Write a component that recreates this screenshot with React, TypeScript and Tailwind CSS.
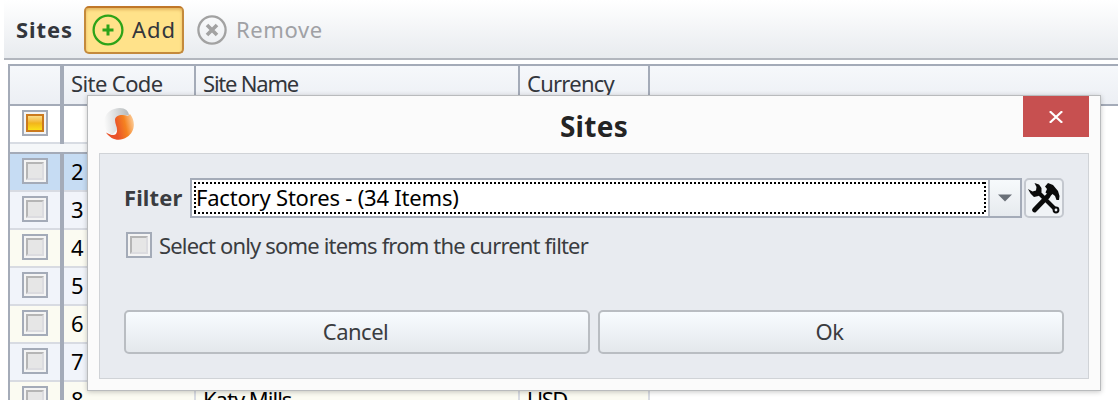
import React, { useId } from "react";

const FONT = "font-['Noto_Sans','Open_Sans',sans-serif]";

function CheckBox({ partial = false }: { partial?: boolean }) {
  return (
    <span className="flex h-[26px] w-[26px] shrink-0 items-center justify-center border-2 border-[#a4abb8] bg-[#f4f4f4]">
      {partial ? (
        <span className="h-[18px] w-[18px] border-2 border-[#cb7a1e] bg-linear-to-b from-[#fbdc86] via-[#f2b41c] to-[#fbe019]" />
      ) : (
        <span className="h-[18px] w-[18px] border-2 border-t-[#b5b5b5] border-r-[#dcdce0] border-b-[#dcdce0] border-l-[#b5b5b5] bg-[#e6e6e6]" />
      )}
    </span>
  );
}

function Tools() {
  return (
    <svg width="32" height="32" viewBox="0 0 32 32" className="shrink-0" fill="none" stroke="#0a0a0a">
      <path d="M6.5 28 L20 14" strokeWidth="4.8" strokeLinecap="round" />
      <path d="M17 4.5 L20 1 L25 3 L30 9 L31.5 14 L31 18 L28.5 18 L27 14 L24.5 12 L22 14.5 L17.5 10.5 L19 7 Z" fill="#0a0a0a" stroke="none" />
      <path d="M11 11 L27 27" strokeWidth="4" />
      <path d="M0 7 L4.5 9.5 L8 8.5 L8.5 5 L6.5 1 L11 2.5 L13.5 6 L13.5 10 L10.5 14 L6 15 L2.5 11.5 Z" fill="#0a0a0a" stroke="none" />
      <circle cx="28" cy="28" r="2.4" strokeWidth="2" fill="#eef1f5" />
    </svg>
  );
}

function Logo() {
  const id = useId();
  return (
    <svg width="32" height="34" viewBox="0 0 32 34">
      <defs>
        <linearGradient id={id + "g"} x1="0" y1="0.3" x2="1" y2="0.2">
          <stop offset="0" stopColor="#fafafa" />
          <stop offset="0.45" stopColor="#dcdedf" />
          <stop offset="1" stopColor="#b4b9bb" />
        </linearGradient>
        <linearGradient id={id + "o"} x1="0.3" y1="0.3" x2="1" y2="0.15">
          <stop offset="0" stopColor="#e9522a" />
          <stop offset="0.5" stopColor="#f58220" />
          <stop offset="1" stopColor="#fcd3a4" />
        </linearGradient>
      </defs>
      <path d="M1 16 C1 6 9 1 17 1 C22 1 26 4 26 8.5 C21 8 15 9 14 13 L15 22 L9 28 C4 25 1 21 1 16Z" fill={`url(#${id}g)`} />
      <path d="M12 13 C12 8 19 7 25 9 L27 7 C33 14 32 25 24 30 C17 35 8 33 3 25.5 C7 28 11 29 13 27 C16 22 12 18 12 13Z" fill={`url(#${id}o)`} />
    </svg>
  );
}

const rows = [
  { code: "2", tone: "bg-[#c6dcf3]" },
  { code: "3", tone: "bg-[#f1f4fa]" },
  { code: "4", tone: "bg-[#fbfbf2]" },
  { code: "5", tone: "bg-[#f1f4fa]" },
  { code: "6", tone: "bg-[#fbfbf2]" },
  { code: "7", tone: "bg-[#f1f4fa]" },
  { code: "8", tone: "bg-[#fbfbf2]", name: "Katy Mills", currency: "USD" },
];

function Toolbar() {
  return (
    <div className="ml-1 flex h-[60px] items-start border-b-2 border-[#b2b6be] bg-linear-to-b from-white to-[#e8ebef] text-[22px] leading-[46px] text-[#33363c]">
      <span className="mt-1.5 ml-3 w-[68px] font-bold tracking-[0.9px]">Sites</span>
      <button className="mt-1.5 flex h-12 w-[100px] items-center rounded-[5px] border-2 border-[#c48a3c] border-t-[#c07728] bg-[#ffe28a] pl-1.5 shadow-[inset_0_2px_3px_#e5b761]">
        <svg width="32" height="32" viewBox="0 0 32 32" fill="none" stroke="#2da318">
          <circle cx="16" cy="16" r="14.4" strokeWidth="2.3" />
          <path d="M16 10.5v11M10.5 16h11" strokeWidth="3" />
        </svg>
        <span className="mb-0.5 ml-2 leading-[42px] tracking-[0.9px]">Add</span>
      </button>
      <button className="mt-1.5 flex h-12 items-center pl-[13px] text-[#a0a1a5]">
        <svg width="30" height="30" viewBox="0 0 30 30" fill="none" stroke="#a2a2a2">
          <circle cx="15" cy="15" r="13.6" strokeWidth="2.3" />
          <path d="M10 10l10 10M20 10l-10 10" strokeWidth="3.6" />
        </svg>
        <span className="mb-0.5 ml-[9px] tracking-[0.6px]">Remove</span>
      </button>
    </div>
  );
}

function Grid() {
  return (
    <div className="mt-1 ml-2 h-[340px] border-t-2 border-l-2 border-[#a4abb8] text-[22px] text-black">
      <div className="flex h-10 border-b-2 border-[#a4abb8] bg-linear-to-b from-[#f6f8fb] to-[#eceff4] leading-[34px] text-[#33363c]">
        <div className="w-[54px] border-r-4 border-[#a4abb8]" />
        <div className="w-[132px] border-r-2 border-[#a4abb8] pl-[7px] tracking-[-0.6px]">Site Code</div>
        <div className="w-[324px] border-r-2 border-[#a4abb8] pl-[7px] tracking-[-1.2px]">Site Name</div>
        <div className="w-[130px] border-r-2 border-[#a4abb8] pl-[7px] tracking-[-0.75px]">Currency</div>
      </div>
      <div className="flex h-[38px] w-[640px] border-b-2 border-[#d8dce3] bg-white">
        <div className="h-[38px] w-[54px] border-r-4 border-[#a4abb8] pt-1 pl-3"><CheckBox partial /></div>
      </div>
      <div className="h-2.5 w-[640px] border-b-2 border-[#a4abb8] bg-[#f5f7f9]" />
      {rows.map((r) => (
        <div key={r.code} className={`flex h-[38px] w-[640px] leading-[34px] ${r.tone}`}>
          <div className="flex w-[54px] border-r-4 border-[#a4abb8]">
            <div className="w-full border-b-2 border-[#d8dbe2] pt-1 pl-3"><CheckBox /></div>
          </div>
          <div className="w-[132px] border-r-2 border-b-2 border-[#d8dbe2] pl-[7px]">{r.code}</div>
          <div className="w-[324px] border-r-2 border-b-2 border-[#d8dbe2] pl-[7px] tracking-[-1px]">{r.name}</div>
          <div className="w-[130px] border-r-2 border-b-2 border-[#d8dbe2] pl-[7px] tracking-[-1.4px]">{r.currency}</div>
        </div>
      ))}
    </div>
  );
}

function Dialog() {
  const action =
    "h-11 flex-1 rounded-[5px] border-2 border-[#b9bdc2] bg-linear-to-b from-[#f8fcff] to-[#e4e8ec] pr-[3px] pb-1 text-center leading-[38px] tracking-[-0.5px]";
  return (
    <div role="dialog" className="absolute top-[95px] left-[87px] flex h-[296px] w-[1014px] flex-col border border-[#b9bbbd] bg-[#fbfbfb] px-[11px] pb-[11px] text-[22px] text-[#3a3c40] shadow-[0_1px_5px_rgba(0,0,0,0.22)]">
      <div className="flex h-[57px] items-start justify-between">
        <div className="w-[66px] pt-[11px] pl-[4px]"><Logo /></div>
        <h1 className="text-[28px] leading-[61px] font-bold tracking-[0.3px] text-[#242424]">Sites</h1>
        <button className="flex h-[41px] w-[66px] items-center justify-center bg-[#c75050]">
          <svg width="14" height="12" viewBox="0 0 14 12" stroke="white" strokeWidth="2.2"><path d="M.8.3l12.4 11.4M13.2.3L.8 11.7" /></svg>
        </button>
      </div>
      <div className="h-[226px] border border-[#d0d3d7] bg-[#e8ebf0] px-6 pt-6">
        <div className="flex h-10 items-center">
          <label className="w-[66px] pb-0.5 font-bold tracking-[0.1px]">Filter</label>
          <div className="flex h-10 w-[832px] border-2 border-[#a4abb8] bg-white">
            <div className="relative my-0.5 ml-0.5 h-8 w-[792px] pl-0.5 leading-[30px] tracking-[-0.2px] text-black">
              <svg className="absolute top-0 left-0" width="792" height="32" fill="none" stroke="#000" strokeWidth="2" strokeDasharray="2 2">
                <path d="M0 1H792M0 31H792M1 0V32M791 0V32" />
              </svg>
              Factory Stores - (34 Items)
            </div>
            <div className="ml-0.5 flex w-8 items-center justify-center border-l-2 border-[#b3b8c2] bg-linear-to-b from-[#f7fafc] to-[#e6eaee]">
              <svg width="14" height="8" viewBox="0 0 14 8" fill="#6a7078"><path d="M0 .5h14L7 7.5z" /></svg>
            </div>
          </div>
          <button className="ml-0.5 flex h-10 w-10 items-center justify-center rounded-[5px] border-2 border-[#c4c8cf] bg-[#f0f3f6]"><Tools /></button>
        </div>
        <label className="mt-3.5 flex h-[26px] items-center pl-0.5">
          <CheckBox />
          <span className="ml-[7px] tracking-[-0.83px]">Select only some items from the current filter</span>
        </label>
        <div className="mt-[52px] flex gap-2">
          <button className={action}>Cancel</button>
          <button className={action}>Ok</button>
        </div>
      </div>
    </div>
  );
}

export default function App() {
  return (
    <div className={`relative h-[400px] w-[1118px] overflow-hidden bg-white ${FONT}`}>
      <Toolbar />
      <Grid />
      <Dialog />
    </div>
  );
}
